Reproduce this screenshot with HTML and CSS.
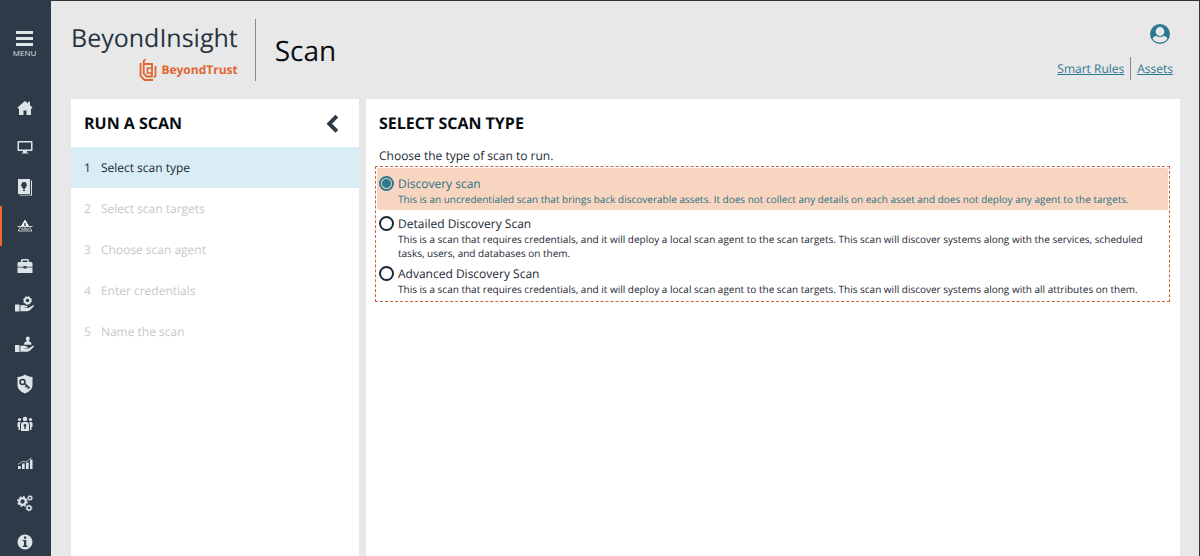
FILE: index.html
```html
<!DOCTYPE html>
<html lang="en">
<head>
<meta charset="utf-8">
<title>BeyondInsight - Scan</title>
<link rel="stylesheet" href="styles.css">
</head>
<body>
<div class="app">
  <aside class="sidebar">
    <button class="menu-button" type="button">
      <svg class="menu-icon" viewBox="0 0 17 15" aria-hidden="true"><path d="M0 0h17v3H0zM0 6h17v3H0zM0 12h17v3H0z"/></svg>
      <span>MENU</span>
    </button>
    <nav class="nav" aria-label="Main">
      <a class="nav-item" href="#home" aria-label="Home"><svg viewBox="0 0 20 20"><path d="M10 3 2.500 9.500l1 1.200H4V17h4.500v-4.500h3V17H16v-6.300h.5l1-1.200L15 7.300V3.800h-2v1.800z"/></svg></a>
      <a class="nav-item" href="#assets" aria-label="Assets"><svg viewBox="0 0 20 20"><path fill-rule="evenodd" d="M3.500 4h13c.7 0 1 .3 1 1v8c0 .7-.3 1-1 1h-4.500v1.500l1.500.5v.6h-7V16l1.500-.5V14H3.500c-.7 0-1-.3-1-1V5c0-.7.3-1 1-1zM4 5.500v7h12v-7z"/></svg></a>
      <a class="nav-item" href="#smart-rules" aria-label="Smart Rules"><svg viewBox="0 0 20 20"><path fill-rule="evenodd" d="M3 2h12v15H3zM9 5a3 3 0 0 0-1.500 5.500L8 12h2l.5-1.500A3 3 0 0 0 9 5zM8 12.700v1.300h2v-1.300z"/><path d="M16 3.500h1v15H4.500v-.8H16z"/></svg></a>
      <a class="nav-item active" href="#scan" aria-label="Scan" aria-current="page"><svg viewBox="0 0 20 20"><path fill-rule="evenodd" d="M10 3.500 14 10H6zM9.300 7v3h1.400V7z"/><path d="M2.500 10h15v.8h-15z"/><path fill="none" stroke="currentColor" stroke-width=".7" d="m5.500 11-2.300 4h13.600l-2.300-4M7.500 11.500l-1 1.700h7l-1-1.700M10 11v2"/></svg></a>
      <a class="nav-item" href="#jobs" aria-label="Jobs"><svg viewBox="0 0 20 20"><path fill-rule="evenodd" d="M7 3h6l1 1v2h2.500l1 1v3.700h-6V10h-3v.7h-6V7l1-1H6V4zM7.500 4.500V6h5V4.500z"/><path d="M2.500 11.500h6v1h3v-1h6V17h-15z"/></svg></a>
      <a class="nav-item" href="#managed-systems" aria-label="Managed systems"><svg viewBox="0 0 20 20"><g fill="none" stroke="currentColor"><circle cx="12.500" cy="5.500" r="2.700" stroke-width="2"/><circle cx="12.500" cy="5.500" r="4" stroke-width="1" stroke-dasharray="1.600 1.540"/></g><path d="M0 9.500h4.500v7H0zM5.300 10.500l2.700-.5c2 0 2.500 1 4 1 1 0 1 1.200 0 1.500H9.500v.5h4l4-2.500c1.200-.6 2 .2 1.200 1l-4.200 4-2 .7H5.300z"/></svg></a>
      <a class="nav-item" href="#managed-accounts" aria-label="Managed accounts"><svg viewBox="0 0 20 20"><path d="M12.800 1.500a2.200 2.200 0 0 1 1.100 4l.3 1c2 .5 2.300 1.500 2.300 3.300H9c0-1.800.4-2.800 2.400-3.300l.3-1a2.200 2.200 0 0 1 1.100-4z"/><path d="M0 10h4.500v7H0zM5.300 11l2.700-.5c2 0 2.500 1 4 1 1 0 1 1.200 0 1.500H9.500v.5h4l4-2.500c1.200-.6 2 .2 1.200 1L14.500 16l-2 .7H5.300z"/></svg></a>
      <a class="nav-item" href="#password-safe" aria-label="Password Safe"><svg viewBox="0 0 20 20"><path d="M10 .5c2 1.600 4.500 2.500 7.500 2.500v8c0 4-3 6.500-7.500 8.500C5.500 17.500 2.500 15 2.500 11V3C5.500 3 8 2.100 10 .5z"/><g fill="none" stroke="#2d3a47" stroke-width="1.500"><circle cx="7.500" cy="8" r="2.500"/><path d="m9.500 9.700 5.200 4.300m-3-2.500-1.300 1.700m3.300 0-1.200 1.500"/></g></svg></a>
      <a class="nav-item" href="#endpoint-privilege" aria-label="Endpoint privilege management"><svg viewBox="0 0 20 20"><circle cx="10" cy="5" r="2.300"/><circle cx="4.500" cy="5.500" r="1.600"/><circle cx="15.500" cy="5.500" r="1.600"/><path fill-rule="evenodd" d="M8 8h4l2 1.500V17H6V9.500zM10 10a1.400 1.400 0 0 0-.7 2.600V15h1.400v-2.400A1.400 1.400 0 0 0 10 10z"/><path d="M3.500 8h2.800L5 9.500V16H3.500v-3h-1V9zM16.500 8h-2.800L15 9.500V16h1.500v-3h1V9z"/></svg></a>
      <a class="nav-item" href="#analytics" aria-label="Analytics and reporting"><svg viewBox="0 0 20 20"><path d="M3 13h2.700v3H3zM7 10.500h2.700V16H7zM11 9.500h2.700V16H11zM15 6.500h2.500V16H15z"/><path fill="none" stroke="currentColor" stroke-width=".7" d="m3 11.500 4.500-3 4 .2 5-4"/></svg></a>
      <a class="nav-item" href="#configuration" aria-label="Configuration"><svg viewBox="0 0 20 20"><g fill="none" stroke="currentColor"><circle cx="7.500" cy="8.500" r="3.300" stroke-width="2.300"/><circle cx="7.500" cy="8.500" r="4.900" stroke-width="1.200" stroke-dasharray="1.900 1.950"/><circle cx="15" cy="5" r="1.700" stroke-width="1.200"/><circle cx="15" cy="5" r="2.600" stroke-width=".8" stroke-dasharray="1 1.040"/><circle cx="14" cy="15" r="2" stroke-width="1.500"/><circle cx="14" cy="15" r="3" stroke-width=".8" stroke-dasharray="1.200 1.156"/></g></svg></a>
      <a class="nav-item" href="#about" aria-label="About"><svg viewBox="0 0 20 20"><path fill-rule="evenodd" d="M10 2.500a7.500 7.500 0 1 0 0 15 7.500 7.500 0 0 0 0-15zM9 4.500h2.300v2.200H9zM7.700 8h3.600v5.700h1.200V15H7.700v-1.300H9V9.300H7.700z"/></svg></a>
    </nav>
  </aside>
  <div class="page">
    <header class="header">
      <div class="brand">
        <div class="brand-name">BeyondInsight</div>
        <div class="brand-owner">
          <svg class="brand-mark" viewBox="0 0 18 22" aria-hidden="true"><g fill="none" stroke="currentColor" stroke-width="1.800"><path d="M1.500 4v13l4 4H14"/><path d="m6.500 0-1.800 2v12.500l3 3h5.300V5H4.700"/><path d="M13 9H8.500v5H13" stroke-width="1.600"/><path d="M16.500 7v10L15 18.500"/></g></svg>
          <span>BeyondTrust</span>
        </div>
      </div>
      <h1 class="page-title">Scan</h1>
      <div class="account">
        <button class="profile" type="button" aria-label="Profile"><svg viewBox="0 0 20 20" aria-hidden="true"><circle cx="10" cy="10" r="10" fill="#2d7891"/><path d="M2.500 14.500c1-2 3-2.500 4.500-2.800h6c1.500.3 3.500.8 4.500 2.800A9 9 0 0 1 2.500 14.500z" fill="#e8e8e8"/><circle cx="10" cy="7.500" r="5" fill="#e8e8e8" stroke="#2d7891" stroke-width="1.200"/></svg></button>
        <nav class="quick-links" aria-label="Quick links"><a href="#smart-rules">Smart Rules</a><a href="#assets">Assets</a></nav>
      </div>
    </header>
    <main class="content">
      <section class="steps">
        <div class="steps-header">
          <h2>RUN A SCAN</h2>
          <button class="collapse" type="button" aria-label="Collapse"><svg viewBox="0 0 12 18" aria-hidden="true"><path d="M10 2 3 9l7 7" fill="none" stroke="currentColor" stroke-width="3.600"/></svg></button>
        </div>
        <ol class="step-list">
          <li class="step current" aria-current="step"><span>1</span><span>Select scan type</span></li>
          <li class="step"><span>2</span><span>Select scan targets</span></li>
          <li class="step"><span>3</span><span>Choose scan agent</span></li>
          <li class="step"><span>4</span><span>Enter credentials</span></li>
          <li class="step"><span>5</span><span>Name the scan</span></li>
        </ol>
      </section>
      <section class="detail">
        <h2>SELECT SCAN TYPE</h2>
        <p class="prompt" id="prompt">Choose the type of scan to run.</p>
        <div class="options" role="radiogroup" aria-labelledby="prompt">
          <label class="option selected">
            <input type="radio" name="scan-type" checked>
            <span class="option-text"><span class="option-title">Discovery scan</span><span class="option-note">This is an uncredentialed scan that brings back discoverable assets. It does not collect any details on each asset and does not deploy any agent to the targets.</span></span>
          </label>
          <label class="option">
            <input type="radio" name="scan-type">
            <span class="option-text"><span class="option-title">Detailed Discovery Scan</span><span class="option-note">This is a scan that requires credentials, and it will deploy a local scan agent to the scan targets. This scan will discover systems along with the services, scheduled tasks, users, and databases on them.</span></span>
          </label>
          <label class="option">
            <input type="radio" name="scan-type">
            <span class="option-text"><span class="option-title">Advanced Discovery Scan</span><span class="option-note">This is a scan that requires credentials, and it will deploy a local scan agent to the scan targets. This scan will discover systems along with all attributes on them.</span></span>
          </label>
        </div>
      </section>
    </main>
  </div>
</div>
</body>
</html>
```

FILE: styles.css
```css
* { box-sizing: border-box; }

body {
  margin: 0;
  font-family: "Open Sans", "Noto Sans", sans-serif;
  font-size: 12px;
  text-rendering: geometricPrecision;
  color: #1c2733;
  background: #e8e8e8;
}

h1, h2, p, ol { margin: 0; padding: 0; }

button {
  padding: 0;
  border: 0;
  background: none;
  font: inherit;
  color: inherit;
}

svg { display: block; }

.app {
  display: flex;
  height: 100vh;
  overflow: hidden;
}

.sidebar {
  flex: 0 0 51px;
  background: #2d3a47;
  color: #dce4e8;
}

.menu-button {
  display: flex;
  flex-direction: column;
  align-items: center;
  width: 49px;
  height: 88px;
  padding-top: 31px;
  font-size: 8px;
  line-height: 12px;
}

.menu-icon {
  width: 17px;
  height: 15px;
  margin-bottom: 1px;
  fill: currentColor;
}

.nav-item {
  display: flex;
  align-items: center;
  height: 39px;
  padding-left: 15px;
  color: inherit;
}

.nav-item:nth-child(even) { height: 40px; }

.nav-item.active {
  padding-left: 13px;
  border-left: 2px solid #ea6a33;
  color: #fff;
}

.nav-item svg {
  width: 20px;
  height: 20px;
  fill: currentColor;
}

.page {
  display: flex;
  flex: 1;
  flex-direction: column;
  min-width: 0;
  padding: 0 19px 0 20px;
  border-top: 1px solid #34343c;
  border-right: 1px solid #34343c;
}

.header {
  display: flex;
  height: 98px;
}

.brand {
  height: 62px;
  margin-top: 18px;
  padding-right: 17px;
  border-right: 1px solid #85898c;
}

.brand-name {
  font-size: 25px;
  line-height: 39px;
  color: #263442;
}

.brand-owner {
  display: flex;
  align-items: center;
  justify-content: flex-end;
  gap: 4px;
  font-size: 12px;
  font-weight: 700;
  line-height: 23px;
  color: #e2642f;
}

.brand-mark {
  width: 18px;
  height: 22px;
}

.page-title {
  padding: 32px 0 0 19px;
  font-size: 28px;
  font-weight: 400;
  line-height: 36px;
  color: #080d14;
}

.account {
  display: flex;
  flex-direction: column;
  align-items: flex-end;
  margin-left: auto;
  padding: 23px 7px 0 0;
}

.profile {
  width: 20px;
  height: 20px;
  margin: 0 3px 13px 0;
}

.quick-links {
  display: flex;
  line-height: 23px;
}

.quick-links a { color: #2d7891; }

.quick-links a + a {
  margin-left: 6px;
  padding-left: 6px;
  border-left: 1px solid #85898c;
}

.content {
  display: grid;
  flex: 1;
  grid-template-columns: 288px 1fr;
  gap: 7px;
}

.steps, .detail { background: #fff; }

h2 {
  font-size: 16px;
  font-weight: 700;
  line-height: 48px;
  color: #080d14;
}

.steps-header {
  display: flex;
  align-items: center;
  justify-content: space-between;
  padding: 0 20px 0 13px;
}

.collapse {
  width: 13px;
  height: 18px;
  color: #2d3a47;
}

.step-list { list-style: none; }

.step {
  display: flex;
  gap: 10px;
  padding-left: 13px;
  line-height: 41px;
  color: #c6c8ca;
}

.step.current {
  background: #d9edf5;
  color: #1c2733;
}

.detail { padding: 0 10px 0 9px; }

.detail h2, .prompt { padding-left: 4px; }

.prompt {
  padding-bottom: 2px;
  line-height: 17px;
}

.options {
  padding-bottom: 5px;
  border: 1px dashed #c4683c;
}

.option {
  display: flex;
  gap: 4px;
  padding: 6px 20px 0 3px;
}

.option.selected {
  margin: 1px 1px 0;
  padding: 8px 19px 4px 2px;
  border-radius: 2px;
  background: #f7d5c1;
  color: #2d7280;
}

.option input {
  flex: none;
  width: 15px;
  height: 15px;
  margin: 0;
  border: 2px solid #1c2733;
  border-radius: 50%;
  appearance: none;
}

.option input:checked {
  border-color: #2d7891;
  background: radial-gradient(circle, #2d7891 4px, transparent 5px);
}

.option-title, .option-note { display: block; }

.option-title { line-height: 16px; }

.option-note {
  font-size: 10px;
  line-height: 14px;
}
```
